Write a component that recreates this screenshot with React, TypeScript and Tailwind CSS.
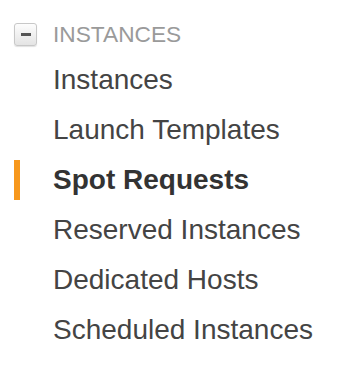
const items = [
  { label: "Instances" },
  { label: "Launch Templates" },
  { label: "Spot Requests", active: true },
  { label: "Reserved Instances" },
  { label: "Dedicated Hosts" },
  { label: "Scheduled Instances" },
];

export default function App() {
  return (
    <div className="w-[356px] h-[370px] bg-white pt-[23px] pl-[14px] font-['Liberation_Sans',Arial,sans-serif]">
      {/* section header */}
      <div className="flex items-center h-[23px]">
        <div className="w-[23px] h-[23px] rounded-[3px] border border-[#c8c8c8] bg-gradient-to-b from-[#fdfdfd] to-[#e4e4e4] shadow-[0_1px_1px_rgba(0,0,0,0.12)] flex items-center justify-center">
          <div className="w-[10px] h-[3px] bg-[#555]"></div>
        </div>
        <span className="ml-[16px] text-[22.7px] leading-none text-[#9a9a9a]">INSTANCES</span>
      </div>

      {/* nav items */}
      <ul className="mt-[9px]">
        {items.map((item) => (
          <li key={item.label} className="flex items-center h-[50px]">
            <div className={item.active ? "w-[6px] h-[40px] bg-[#f7981d]" : "w-[6px] h-[40px]"}></div>
            <span
              className={
                item.active
                  ? "ml-[33px] text-[28px] leading-none font-bold text-[#333] whitespace-nowrap"
                  : "ml-[33px] text-[28px] leading-none text-[#444] whitespace-nowrap"
              }
            >
              {item.label}
            </span>
          </li>
        ))}
      </ul>
    </div>
  );
}
